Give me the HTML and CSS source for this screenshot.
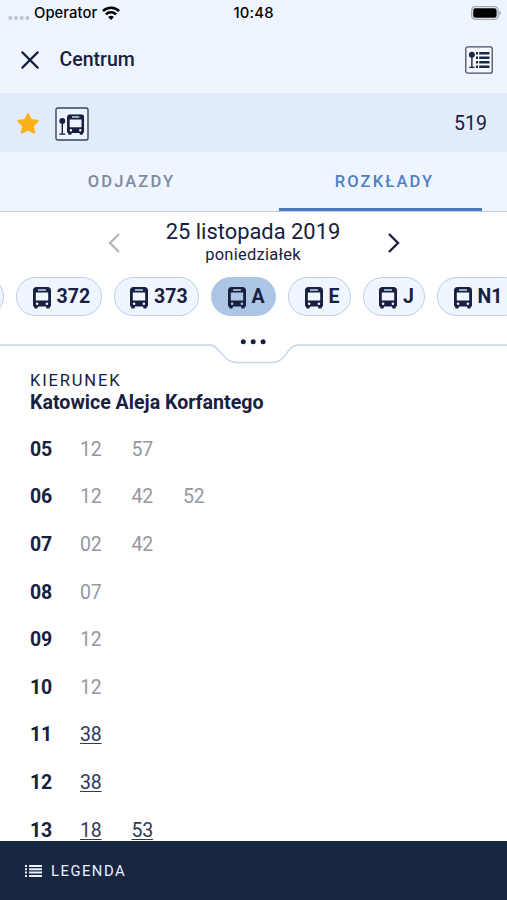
FILE: index.html
```html
<!DOCTYPE html>
<html lang="pl">
<head>
<meta charset="utf-8">
<meta name="viewport" content="width=device-width, initial-scale=1">
<title>Centrum – rozkłady</title>
<link rel="stylesheet" href="styles.css">
</head>
<body>
<svg class="defs" width="0" height="0">
  <symbol id="bus" viewBox="0 0 18 22">
    <path fill="currentColor" fill-rule="evenodd" d="M3.600 0h10.800Q18 0 18 3.600V18.400Q18 19.600 16.800 19.600V20.500Q16.800 21.600 15.700 21.600H14.300Q13.200 21.600 13.200 20.500V19.600H4.800V20.500Q4.800 21.600 3.700 21.600H2.300Q1.200 21.600 1.200 20.500V19.600Q0 19.600 0 18.400V3.600Q0 0 3.600 0ZM2.800 5.500V13.600H15.200V5.500ZM5.300 2V3.900H12.700V2ZM2.800 16.700a1.300 1.300 0 1 0 2.600 0a1.300 1.300 0 1 0-2.600 0ZM12.600 16.700a1.300 1.300 0 1 0 2.600 0a1.300 1.300 0 1 0-2.600 0Z"/>
    <path fill="#9ba7bd" d="M5.300 2h7.400v1.900H5.300z"/>
  </symbol>
</svg>
<div class="app">
  <div class="status">
    <div class="carrier">
      <svg class="signal" width="22" height="6" viewBox="0 0 22 6" fill="#b9c0cb"><circle cx="2.300" cy="3" r="1.900"/><circle cx="8" cy="3" r="1.900"/><circle cx="13.700" cy="3" r="1.900"/><circle cx="19.400" cy="3" r="1.900"/></svg>
      <span class="operator">Operator</span>
      <svg class="wifi" width="18" height="14" viewBox="0 0 18 14" fill="none" stroke="#000" stroke-width="2.500"><path d="M.9 5.100a11.600 11.600 0 0 1 16.200 0"/><path d="M3.900 8.400a7.200 7.200 0 0 1 10.200 0"/><path fill="#000" stroke="none" d="M9 13.900L6.100 11a4 4 0 0 1 5.800 0z"/></svg>
    </div>
    <span class="clock">10:48</span>
    <svg class="battery" width="30" height="14" viewBox="0 0 30 14"><rect x=".7" y=".7" width="26.400" height="12.600" rx="3.600" fill="none" stroke="#a3a7ad" stroke-width="1.300"/><rect x="2.200" y="2.200" width="23.400" height="9.600" rx="2.200"/><path d="M28.300 4.700q1.700.8 1.700 2.300t-1.700 2.300z" fill="#a3a7ad"/></svg>
  </div>
  <header class="header">
    <svg class="close" width="18" height="18" viewBox="0 0 18 18" fill="none" stroke="#17203f" stroke-width="2.200" stroke-linecap="round"><path d="M1.400 1.400l15.200 15.200M16.600 1.400L1.400 16.600"/></svg>
    <h1 class="title">Centrum</h1>
    <svg class="board" width="28" height="28" viewBox="0 0 28 28" fill="#1a2745"><rect x=".8" y=".8" width="26.400" height="26.400" rx="2" fill="#f5f9ff" stroke="#434e69" stroke-width="1.300"/><circle cx="6.900" cy="8.800" r="3"/><path d="M6.200 10h1.400v10.700h2v1.300H4.200v-1.300h2zM11 6h2v2.500h-2zm3.200 0h10.300v2.500H14.200zM11 10.400h2v2.500h-2zm3.200 0h10.300v2.500H14.200zM11 14.900h2v2.500h-2zm3.200 0h10.300v2.500H14.200zM11 19.400h2v2.500h-2zm3.200 0h10.300v2.500H14.200z"/></svg>
  </header>
  <div class="stop">
    <svg class="star" width="22" height="21" viewBox="0 0 22 21"><path fill="#fbb11b" stroke="#fbb11b" stroke-width="1.800" stroke-linejoin="round" d="M11 1l3 6 7 .9-5.100 4.900 1.300 7L11 16.700l-6.200 3.100 1.300-7L1 7.900 8 7z"/></svg>
    <svg class="stop-icon" width="34" height="34" viewBox="0 0 34 34"><rect x="1" y="1" width="32" height="32" rx="2" fill="#edf4ff" stroke="#35415e" stroke-width="1.400"/><g fill="#17203f"><circle cx="7.300" cy="14" r="3"/><path d="M6.600 15H8v11.500h2.300v1.300H4.300v-1.300h2.300z"/></g><use href="#bus" x="12" y="7.200" width="17.200" height="21" color="#17203f"/></svg>
    <span class="stop-number">519</span>
  </div>
  <nav class="tabs">
    <a class="tab">ODJAZDY</a>
    <a class="tab tab-active">ROZKŁADY</a>
  </nav>
  <div class="date">
    <svg class="prev" width="12" height="20" viewBox="0 0 12 20" fill="none" stroke="#b3b5b7" stroke-width="2.200"><path d="M11 1L2 10l9 9"/></svg>
    <div class="date-text">
      <div class="day">25 listopada 2019</div>
      <div class="weekday">poniedziałek</div>
    </div>
    <svg class="next" width="12" height="20" viewBox="0 0 12 20" fill="none" stroke="#17203f" stroke-width="2.400"><path d="M1 1l9 9-9 9"/></svg>
  </div>
  <div class="lines">
    <div class="chip chip-wide"></div>
    <div class="chip chip-wide"><svg class="bus"><use href="#bus"/></svg>372</div>
    <div class="chip chip-wide"><svg class="bus"><use href="#bus"/></svg>373</div>
    <div class="chip chip-active"><svg class="bus"><use href="#bus"/></svg>A</div>
    <div class="chip"><svg class="bus"><use href="#bus"/></svg>E</div>
    <div class="chip"><svg class="bus"><use href="#bus"/></svg>J</div>
    <div class="chip chip-wide"><svg class="bus"><use href="#bus"/></svg>N1</div>
  </div>
  <svg class="notch" width="507" height="30" viewBox="0 0 507 30"><path fill="none" stroke="#c3d4e9" stroke-width="1.300" d="M0 11H210C220 11 222 28.500 237 28.500H272C287 28.500 286 11 298 11H507"/><g fill="#17203f"><circle cx="243.300" cy="7.700" r="2.500"/><circle cx="253.200" cy="7.700" r="2.500"/><circle cx="263.100" cy="7.700" r="2.500"/></g></svg>
  <main class="timetable">
    <div class="label">KIERUNEK</div>
    <div class="direction">Katowice Aleja Korfantego</div>
    <div class="hours">
      <div class="row"><b>05</b><span>12</span><span>57</span></div>
      <div class="row"><b>06</b><span>12</span><span>42</span><span>52</span></div>
      <div class="row"><b>07</b><span>02</span><span>42</span></div>
      <div class="row"><b>08</b><span>07</span></div>
      <div class="row"><b>09</b><span>12</span></div>
      <div class="row"><b>10</b><span>12</span></div>
      <div class="row upcoming"><b>11</b><span>38</span></div>
      <div class="row upcoming"><b>12</b><span>38</span></div>
      <div class="row upcoming"><b>13</b><span>18</span><span>53</span></div>
    </div>
  </main>
  <footer class="legend">
    <svg width="17" height="12" viewBox="0 0 17 12" fill="#e9f2ff"><path d="M0 0h2v2H0zm4 0h13v2H4zM0 3.300h2v2H0zm4 0h13v2H4zM0 6.600h2v2H0zm4 0h13v2H4zM0 9.900h2v2H0zm4 0h13v2H4z"/></svg>
    <span>LEGENDA</span>
  </footer>
</div>
</body>
</html>
```

FILE: styles.css
```css
* { box-sizing: border-box; }
body {
  margin: 0;
  font-family: Roboto, "Noto Sans", sans-serif;
  color: #17203f;
  background: #fff;
}
svg { display: block; flex: none; }
.defs { position: absolute; }
.app { height: 900px; display: flex; flex-direction: column; overflow: hidden; }
.app > * { flex: none; }
.status {
  height: 26px;
  padding: 0 6px 0 8px;
  background: #eef5ff;
  color: #000;
  font: 500 14.8px/26px Inter, Roboto, sans-serif;
  display: grid;
  grid-template-columns: 225.500px auto 1fr;
  align-items: center;
}
.carrier { display: flex; align-items: center; }
.signal { margin-top: 9px; }
.operator { margin-left: 4px; letter-spacing: .05px; }
.wifi { margin-left: 5px; }
.clock { letter-spacing: .2px; }
.battery { justify-self: end; }
.header {
  height: 67px;
  padding: 0 14px 0 21px;
  background: #eef5ff;
  display: flex;
  align-items: center;
}
.close { margin-top: 1px; }
.title { margin: 0 auto 0 20.500px; font-size: 19.500px; font-weight: 500; line-height: 26px; }
.stop {
  height: 59px;
  padding: 0 20px 0 17px;
  background: #e1ebfa;
  display: flex;
  align-items: center;
}
.stop-icon { margin: 2px 0 0 16px; }
.star { margin-top: 1px; }
.stop-number { margin: 1px 0 0 auto; font-size: 19.500px; }
.tabs {
  height: 60px;
  padding: 0 25px;
  background: #eef5ff;
  border-bottom: 1px solid #bdd0ea;
  display: flex;
  justify-content: space-between;
}
.tab {
  width: 203px;
  height: 59px;
  padding-left: 10px;
  text-align: center;
  font-size: 16.500px;
  font-weight: 500;
  line-height: 60px;
  letter-spacing: 2.150px;
  color: #7d8a9d;
}
.tab-active { color: #4f7fc4; border-bottom: 3px solid #4b78bd; padding-left: 8px; }
.date {
  height: 65px;
  padding: 0 107px 4px 108px;
  display: flex;
  align-items: center;
  justify-content: space-between;
}
.date-text { text-align: center; margin: -2px 2px 0 0; }
.day { font-size: 21.900px; line-height: 26px; }
.weekday { font-size: 16.500px; line-height: 20px; letter-spacing: .25px; }
.lines { display: flex; gap: 12px; margin-left: -81.500px; width: 620px; }
.chip {
  width: 62.500px;
  height: 39px;
  padding-left: 15.500px;
  border: 1.300px solid #bacde8;
  border-radius: 20px;
  background: #eff6ff;
  display: flex;
  flex: none;
  align-items: center;
  gap: 6px;
  font-size: 19.500px;
  font-weight: 700;
}
.chip-wide { width: 85.500px; }
.chip-active { width: 65px; background: #adc6e5; border-color: #adc6e5; }
.bus { width: 18px; height: 22px; margin-top: 2px; }
.notch { margin-top: 18px; }
.timetable { height: 477px; padding: 7px 0 0 30px; overflow: hidden; }
.label { font-size: 16.500px; line-height: 20px; letter-spacing: 1.850px; margin-top: -.5px; }
.direction { font-size: 19.600px; font-weight: 700; line-height: 24px; }
.hours { margin-top: 11px; }
.row {
  height: 47.600px;
  display: grid;
  grid-template-columns: 50px 51.500px 51.500px 51.500px;
  align-items: center;
  font-size: 19.500px;
  letter-spacing: -.2px;
}
.row span { color: #94999f; }
.upcoming span {
  color: #303954;
  text-decoration: underline;
  text-decoration-thickness: 1px;
  text-underline-offset: 2px;
}
.legend {
  height: 59px;
  padding-left: 25px;
  background: #192641;
  color: #e9f2ff;
  display: flex;
  align-items: center;
  gap: 9px;
  font-size: 14.800px;
  letter-spacing: 1.500px;
}
```
